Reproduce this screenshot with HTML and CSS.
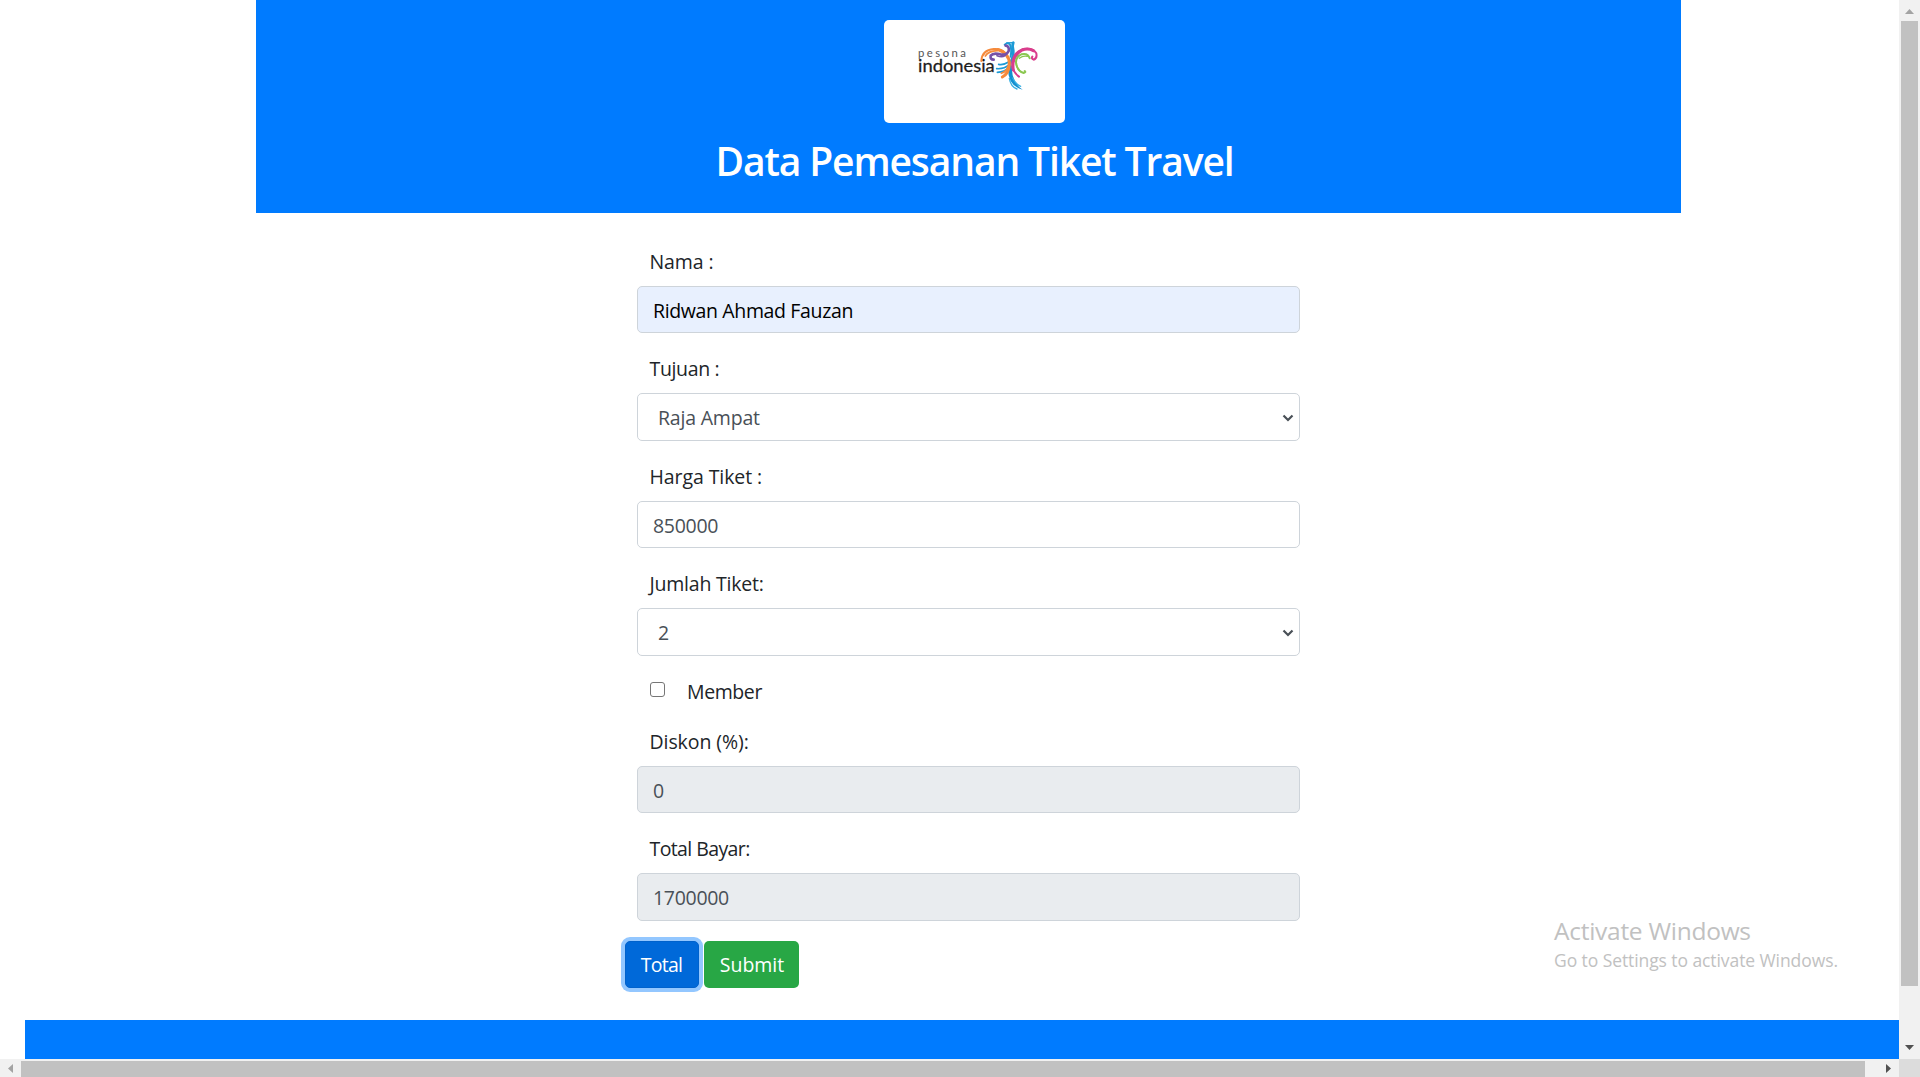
FILE: index.html
```html
<!DOCTYPE html>
<html lang="id">
<head>
<meta charset="utf-8">
<title>Data Pemesanan Tiket Travel</title>
<link rel="stylesheet" href="styles.css">
</head>
<body>
<div class="window">
  <div class="page">
    <header class="header">
      <div class="logo">
        <svg viewBox="42 30 543 309" width="181" height="103" fill="none" stroke-linecap="round" stroke-linejoin="round">
          <text class="logo-small" x="144" y="142" textLength="144" lengthAdjust="spacing">pesona</text>
          <text class="logo-big" x="144" y="186" textLength="230" lengthAdjust="spacingAndGlyphs">indonesia</text>
          <g stroke="#1c9ad6">
            <path d="M404 104 Q414 96 420 104 Q426 114 422 140" stroke-width="6"/>
            <path d="M410 99 L430 98" stroke-width="4"/>
            <path d="M430 98 Q425 108 430 122 Q432 136 425 150 Q418 160 419 180" stroke-width="8"/>
            <path d="M416 156 Q400 166 386 163 M417 164 Q402 178 380 176 M417 172 Q404 186 382 187" stroke-width="5"/>
          </g>
          <path d="M414 170 Q412 228 458 239 Q435 225 428 196 Q425 180 426 166 Z" fill="#1390d0"/>
          <path d="M418 205 Q422 230 441 237 M428 204 Q438 224 452 229" stroke="#38b0e3" stroke-width="4"/>
          <g stroke="#f58a3c">
            <path d="M334 153 Q336 120 371 117 Q394 115 404 127" stroke-width="6"/>
            <path d="M346 138 Q355 123 382 122" stroke-width="5"/>
            <path d="M384 119 Q420 132 418 163 Q417 190 397 201" stroke-width="9"/>
            <path d="M414 168 Q411 184 394 190" stroke-width="5"/>
          </g>
          <g stroke="#7651a8">
            <path d="M407 107 Q419 109 416 123 Q409 137 391 133 Q370 127 362 137 Q360 149 371 149" stroke-width="8"/>
            <path d="M412 130 Q402 145 381 137" stroke-width="5"/>
          </g>
          <g stroke="#d93d8c">
            <path d="M447 200 Q425 184 427 158 Q430 127 458 118 Q487 111 499 130 Q502 146 491 149 Q483 146 487 140" stroke-width="6"/>
            <path d="M430 180 Q423 139 456 120 Q474 113 490 122" stroke-width="9"/>
          </g>
          <g stroke="#8bc751">
            <path d="M479 145 Q474 128 454 133 Q434 142 439 165 Q445 184 461 189 Q469 187 464 183" stroke-width="6"/>
            <path d="M472 139 Q459 136 448 145 M440 161 Q439 178 455 187" stroke-width="4"/>
          </g>
        </svg>
      </div>
      <h1 class="title">Data Pemesanan Tiket Travel</h1>
    </header>

    <form class="form">
      <div class="group">
        <label class="label" for="nama">Nama :</label>
        <input class="control autofilled" id="nama" type="text" value="Ridwan Ahmad Fauzan">
      </div>
      <div class="group">
        <label class="label label-tujuan" for="tujuan">Tujuan :</label>
        <div class="select">
          <select class="control" id="tujuan"><option>Raja Ampat</option></select>
          <svg class="chevron" viewBox="0 0 12 8" width="12" height="8"><path d="M1.5 1.5 L6 6 L10.500 1.500"/></svg>
        </div>
      </div>
      <div class="group">
        <label class="label" for="harga">Harga Tiket :</label>
        <input class="control number" id="harga" type="text" value="850000">
      </div>
      <div class="group">
        <label class="label label-jumlah" for="jumlah">Jumlah Tiket:</label>
        <div class="select">
          <select class="control" id="jumlah"><option>2</option></select>
          <svg class="chevron" viewBox="0 0 12 8" width="12" height="8"><path d="M1.5 1.5 L6 6 L10.500 1.500"/></svg>
        </div>
      </div>
      <div class="check">
        <input class="checkbox" id="member" type="checkbox">
        <label class="check-label" for="member">Member</label>
      </div>
      <div class="group">
        <label class="label" for="diskon">Diskon (%):</label>
        <input class="control readonly" id="diskon" type="text" value="0" readonly>
      </div>
      <div class="group">
        <label class="label label-total" for="total">Total Bayar:</label>
        <input class="control readonly number" id="total" type="text" value="1700000" readonly>
      </div>
      <div class="buttons">
        <button class="btn btn-total" type="button">Total</button>
        <button class="btn btn-submit" type="button">Submit</button>
      </div>
    </form>

    <footer class="footer"></footer>
  </div>

  <div class="vbar">
    <svg class="arrow-up" width="9" height="5" viewBox="0 0 9 5"><path d="M0 5 L4.500 0 L9 5 Z"/></svg>
    <div class="vthumb"></div>
    <svg class="arrow-down" width="9" height="5" viewBox="0 0 9 5"><path d="M0 0 L9 0 L4.500 5 Z"/></svg>
  </div>
  <div class="hbar">
    <svg class="arrow-left" width="5" height="9" viewBox="0 0 5 9"><path d="M5 0 L0 4.500 L5 9 Z"/></svg>
    <div class="hthumb"></div>
    <svg class="arrow-right" width="5" height="9" viewBox="0 0 5 9"><path d="M0 0 L5 4.500 L0 9 Z"/></svg>
  </div>
  <div class="corner"></div>
  <div class="watermark">
    <p class="watermark-title">Activate Windows</p>
    <p class="watermark-text">Go to Settings to activate Windows.</p>
  </div>
</div>
</body>
</html>
```

FILE: styles.css
```css
* { box-sizing: border-box; }

body {
  margin: 0;
  overflow: hidden;
  background: #fff;
  color: #212529;
  font: 19.5px/30px "Open Sans", "Noto Sans", sans-serif;
}

.window {
  position: relative;
  display: grid;
  grid-template: 1059px 18px / 1fr 21px;
  height: 1077px;
}

.page { display: flex; flex-direction: column; overflow: hidden; }

/* Header */
.header {
  display: flex;
  flex-direction: column;
  align-items: center;
  width: 1425px;
  height: 213px;
  margin-left: 256px;
  padding: 20px 0 0 12px;
  background: #007bff;
}
.logo { height: 103px; background: #fff; border-radius: 5px; }
.logo svg { display: block; }
.logo-small { font: 34px Lato, sans-serif; fill: #555; }
.logo-big { font: 50px Lato, sans-serif; fill: #1d1d1d; stroke: #1d1d1d; stroke-width: 0.8; }
.title {
  margin: 14px 0 0;
  color: #fff;
  font-size: 39px;
  font-weight: 600;
  line-height: 48px;
  letter-spacing: -1.12px;
  white-space: nowrap;
}

/* Form */
.form { width: 663px; height: 807px; margin-left: 637px; padding-top: 32.6px; }
.group { margin-bottom: 20px; }
.label { display: block; margin-bottom: 9px; padding: 1px 0 0 12.5px; letter-spacing: -0.08px; }
.label-tujuan { letter-spacing: -0.35px; }
.label-jumlah { letter-spacing: -0.22px; }
.label-total { letter-spacing: -0.6px; }
.control {
  display: block;
  width: 100%;
  height: 47.5px;
  padding: 9px 15px 7px;
  border: 1px solid #ced4da;
  border-radius: 5px;
  outline: 0;
  background: #fff;
  color: #495057;
  font: inherit;
}
.autofilled { background: #e8f0fe; color: #000; letter-spacing: -0.36px; }
.readonly { background: #e9ecef; }
.number { letter-spacing: -0.3px; }
.select { position: relative; }
.select .control { appearance: none; padding-left: 20px; letter-spacing: -0.2px; }
.chevron {
  position: absolute;
  top: 21px;
  right: 6px;
  fill: none;
  stroke: #495057;
  stroke-width: 2.2;
}

.check { display: flex; align-items: flex-start; height: 30px; margin-bottom: 20px; padding-left: 13px; }
.checkbox {
  appearance: none;
  width: 15px;
  height: 15px;
  margin: 6px 22px 0 0;
  border: 1px solid #767676;
  border-radius: 3px;
  background: #fff;
}
.check-label { padding-top: 1px; letter-spacing: -0.4px; }

.buttons { display: flex; gap: 5px; margin-left: -12px; }
.btn {
  height: 47px;
  padding: 1px 0 0;
  border: 0;
  border-radius: 5px;
  color: #fff;
  font: inherit;
}
.btn-total {
  width: 74px;
  padding-right: 1px;
  border: 1px solid #0062cc;
  background: #0069d9;
  box-shadow: 0 0 0 4px #93c7ff;
  letter-spacing: -0.7px;
}
.btn-submit { width: 95px; padding-left: 1px; background: #28a745; }

.footer { height: 39px; margin-left: 25px; background: #007bff; }

/* Scrollbars */
.vbar, .hbar { display: flex; align-items: center; background: #f1f1f1; }
.vbar { flex-direction: column; padding: 9px 0; }
.vthumb { width: 17px; height: 965px; margin: 7px 0 auto; background: #c1c1c1; }
.hbar { padding: 0 8px; }
.hthumb { align-self: flex-end; width: 1844px; height: 16px; margin: 0 auto 0 8px; background: #c1c1c1; }
.arrow-up, .arrow-left { fill: #a3a3a3; }
.arrow-down, .arrow-right { fill: #505050; }
.corner { background: #dcdcdc; }

/* System notice floating above the page */
.watermark { position: absolute; left: 1554px; top: 913px; color: #c1c1c1; }
.watermark p { margin: 0; white-space: nowrap; }
.watermark-title { font-size: 24.5px; line-height: 36px; letter-spacing: -0.27px; }
.watermark-text { font-size: 17.5px; line-height: 22px; letter-spacing: -0.08px; }
```
